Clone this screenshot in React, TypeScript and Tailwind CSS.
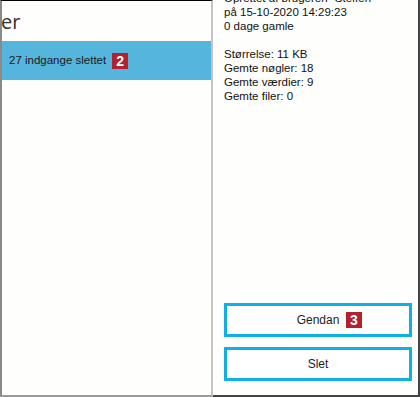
import React from 'react';

const font = { fontFamily: '"Liberation Sans", Arial, sans-serif' };

function Badge({ n }: { n: string }) {
  return (
    <span className="inline-flex items-center justify-center w-[16px] h-[16px] bg-[#b5202e] text-white text-[14px] font-bold leading-none">
      {n}
    </span>
  );
}

export default function App() {
  return (
    <div className="w-[420px] h-[397px] flex bg-[#fefefd] overflow-hidden" style={font}>
      <div className="w-[213px] h-full flex flex-col border-t border-t-black border-l-2 border-l-[#8a8a8a] border-r-2 border-r-[#c4c4c4] border-b-2 border-b-[#9a9a9a]">
        <div className="h-[40px] pt-[9px] text-[20px] leading-[24px] text-[#333] -ml-[1px]" style={{ fontFamily: '"Open Sans", sans-serif' }}>
          er
        </div>
        <div className="h-[39px] bg-[#55b5dd] flex items-center pl-[7px] gap-[6px] text-[11.5px] text-[#1a1a1a]">
          <span>27 indgange slettet</span>
          <Badge n="2" />
        </div>
      </div>
      <div className="flex-1 h-full flex flex-col border-r-2 border-r-[#444] border-b-2 border-b-[#444] pl-[11px] pr-[6px]">
        <div className="-mt-[9px] text-[11.5px] leading-[14px] text-[#111]">
          <div>Oprettet af brugeren "Steffen"</div>
          <div>på 15-10-2020 14:29:23</div>
          <div>0 dage gamle</div>
          <div className="h-[14px]" />
          <div>Størrelse: 11 KB</div>
          <div>Gemte nøgler: 18</div>
          <div>Gemte værdier: 9</div>
          <div>Gemte filer: 0</div>
        </div>
        <div className="mt-auto mb-[14px] flex flex-col gap-[10px]">
          <button className="relative h-[34px] border-[3px] border-[#10b0e2] bg-white text-[12px] text-[#222]">
            Gendan
            <span className="absolute left-[119px] top-[6px]">
              <Badge n="3" />
            </span>
          </button>
          <button className="h-[34px] border-[3px] border-[#10b0e2] bg-white text-[12px] text-[#222]">
            Slet
          </button>
        </div>
      </div>
    </div>
  );
}
